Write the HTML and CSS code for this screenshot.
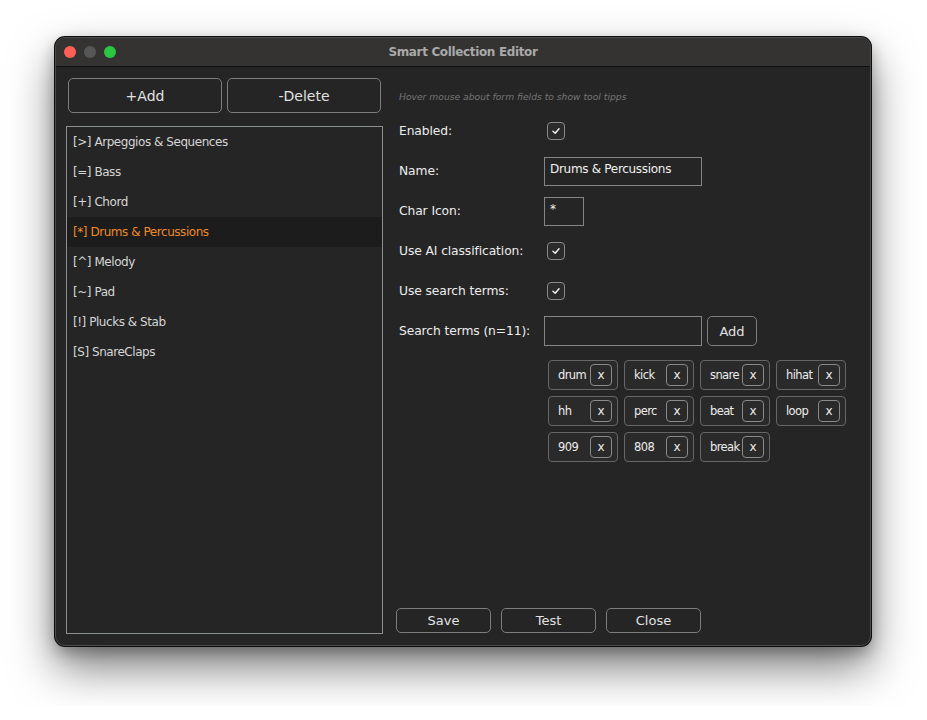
FILE: index.html
```html
<!DOCTYPE html>
<html>
<head>
<meta charset="utf-8">
<link rel="stylesheet" href="styles.css">
</head>
<body>
<div class="window">
  <div class="titlebar">
    <div class="lights">
      <span class="light red"></span>
      <span class="light grey"></span>
      <span class="light green"></span>
    </div>
    <div class="title">Smart Collection Editor</div>
  </div>
  <div class="content">
    <div class="left">
      <div class="topbtns">
        <button class="btn big">+Add</button>
        <button class="btn big">-Delete</button>
      </div>
      <ul class="list">
        <li>[&gt;] Arpeggios &amp; Sequences</li>
        <li>[=] Bass</li>
        <li>[+] Chord</li>
        <li class="sel">[*] Drums &amp; Percussions</li>
        <li>[^] Melody</li>
        <li>[~] Pad</li>
        <li>[!] Plucks &amp; Stab</li>
        <li>[S] SnareClaps</li>
      </ul>
    </div>
    <div class="right">
      <div class="hint">Hover mouse about form fields to show tool tipps</div>
      <div class="form">
        <div class="label">Enabled:</div>
        <div class="ctrl"><span class="check"><svg viewBox="0 0 10 10" width="10" height="10"><path d="M2 5.3 L4.2 7.3 L8 2.8" fill="none" stroke="#f2f2f2" stroke-width="1.5" stroke-linecap="round" stroke-linejoin="round"/></svg></span></div>
        <div class="label">Name:</div>
        <div class="ctrl"><div class="input wide">Drums &amp; Percussions</div></div>
        <div class="label">Char Icon:</div>
        <div class="ctrl"><div class="input small">*</div></div>
        <div class="label">Use AI classification:</div>
        <div class="ctrl"><span class="check"><svg viewBox="0 0 10 10" width="10" height="10"><path d="M2 5.3 L4.2 7.3 L8 2.8" fill="none" stroke="#f2f2f2" stroke-width="1.5" stroke-linecap="round" stroke-linejoin="round"/></svg></span></div>
        <div class="label">Use search terms:</div>
        <div class="ctrl"><span class="check"><svg viewBox="0 0 10 10" width="10" height="10"><path d="M2 5.3 L4.2 7.3 L8 2.8" fill="none" stroke="#f2f2f2" stroke-width="1.5" stroke-linecap="round" stroke-linejoin="round"/></svg></span></div>
        <div class="label">Search terms (n=11):</div>
        <div class="ctrl"><div class="input wide tall"></div><button class="btn addbtn">Add</button></div>
        <div></div>
        <div class="tags">
          <div class="tag"><span>drum</span><span class="x">x</span></div>
          <div class="tag"><span>kick</span><span class="x">x</span></div>
          <div class="tag"><span>snare</span><span class="x">x</span></div>
          <div class="tag"><span>hihat</span><span class="x">x</span></div>
          <div class="tag"><span>hh</span><span class="x">x</span></div>
          <div class="tag"><span>perc</span><span class="x">x</span></div>
          <div class="tag"><span>beat</span><span class="x">x</span></div>
          <div class="tag"><span>loop</span><span class="x">x</span></div>
          <div class="tag"><span>909</span><span class="x">x</span></div>
          <div class="tag"><span>808</span><span class="x">x</span></div>
          <div class="tag"><span>break</span><span class="x">x</span></div>
        </div>
      </div>
      <div class="bottombtns">
        <button class="btn bot">Save</button>
        <button class="btn bot">Test</button>
        <button class="btn bot">Close</button>
      </div>
    </div>
  </div>
</div>
</body>
</html>
```

FILE: styles.css
```css
* { box-sizing: border-box; }
html, body { margin: 0; padding: 0; background: #ffffff; }
body {
  font-family: "DejaVu Sans", "Liberation Sans", sans-serif;
  font-size: 12px;
  color: #e6e6e6;
  padding: 37px 0 60px 55px;
}
.window {
  width: 816px;
  height: 609px;
  border-radius: 10px;
  background: #252525;
  border: 1px solid #4c4c4c;
  box-shadow: 0 0 0 1px #0c0c0c, 0 22px 45px rgba(0,0,0,0.5), 0 6px 16px rgba(0,0,0,0.3);
  display: flex;
  flex-direction: column;
  overflow: hidden;
}
.titlebar {
  height: 29px;
  flex: none;
  background: #343332;
  border-bottom: 1px solid #0f0f0f;
  display: flex;
  align-items: center;
  position: relative;
}
.lights { display: flex; gap: 8px; padding-left: 8px; }
.light { width: 12px; height: 12px; border-radius: 50%; display: block; }
.red { background: #fe5f57; }
.grey { background: #565656; }
.green { background: #2ac841; }
.title {
  position: absolute;
  left: 0; right: 0; top: 0; bottom: 0;
  display: flex; align-items: center; justify-content: center;
  font-weight: bold;
  font-size: 12px;
  letter-spacing: -0.35px;
  color: #a9a9a9;
  pointer-events: none;
}
.content {
  flex: 1;
  display: flex;
  padding: 11px 10px 11px 10px;
  min-height: 0;
}
.left {
  width: 317px;
  flex: none;
  display: flex;
  flex-direction: column;
}
.topbtns { display: flex; gap: 5px; padding: 0 2px; }
.btn {
  background: transparent;
  border: 1px solid #7d7d7d;
  border-radius: 5px;
  color: #e2e2e2;
  font-family: inherit;
  font-size: 13px;
  padding: 0;
  display: flex; align-items: center; justify-content: center;
}
.big { flex: 1; height: 35px; font-size: 14px; }
.list {
  list-style: none;
  margin: 13px 0 0 0;
  padding: 0;
  flex: 1;
  border: 1px solid #8a8f8f;
}
.list li {
  height: 30px;
  line-height: 30px;
  padding-left: 6px;
  color: #d6d6d6;
  letter-spacing: -0.45px;
}
.list li.sel { background: #1c1c1c; color: #ee8a2b; }
.right {
  flex: 1;
  display: flex;
  flex-direction: column;
  padding-left: 13px;
}
.hint {
  margin: 13px 0 8px 3px;
  height: 12px;
  line-height: 12px;
  font-size: 9.2px;
  font-style: italic;
  color: #767676;
}
.form {
  display: grid;
  grid-template-columns: 148px auto;
  grid-auto-rows: 40px;
  align-items: center;
}
.label { padding-left: 3px; color: #ededed; font-size: 12.3px; letter-spacing: -0.1px; }
.ctrl { display: flex; align-items: center; }
.check {
  width: 18px; height: 18px;
  margin-left: 3px;
  border: 1px solid #8a8a8a;
  border-radius: 4px;
  background: #2b2b2b;
  display: flex; align-items: center; justify-content: center;
}
.input {
  height: 29px;
  border: 1px solid #858585;
  padding: 4px 5px;
  line-height: 15px;
  color: #f2f2f2;
  font-size: 12px;
  letter-spacing: -0.3px;
}
.wide { width: 158px; }
.small { width: 40px; }
.tall { height: 30px; }
.addbtn { width: 50px; height: 30px; margin-left: 5px; font-size: 13px; }
.tags {
  align-self: start;
  margin: 9px 0 0 4px;
  width: 300px;
  display: flex;
  flex-wrap: wrap;
  gap: 6px;
  grid-row: span 3;
}
.tag {
  width: 70px;
  height: 30px;
  border: 1px solid #666;
  border-radius: 4px;
  background: #2a2a2a;
  display: flex;
  align-items: center;
  padding: 0 5px 0 9px;
  font-size: 11.5px;
  letter-spacing: -0.6px;
  color: #ececec;
}
.tag .x {
  margin-left: auto;
  width: 22px; height: 22px;
  border: 1px solid #8a8a8a;
  border-radius: 4px;
  display: flex; align-items: center; justify-content: center;
  font-size: 12px;
  letter-spacing: 0;
}
.bottombtns {
  margin-top: auto;
  margin-bottom: 1px;
  display: flex;
  gap: 10px;
}
.bot { width: 95px; height: 25px; font-size: 13px; }
```
